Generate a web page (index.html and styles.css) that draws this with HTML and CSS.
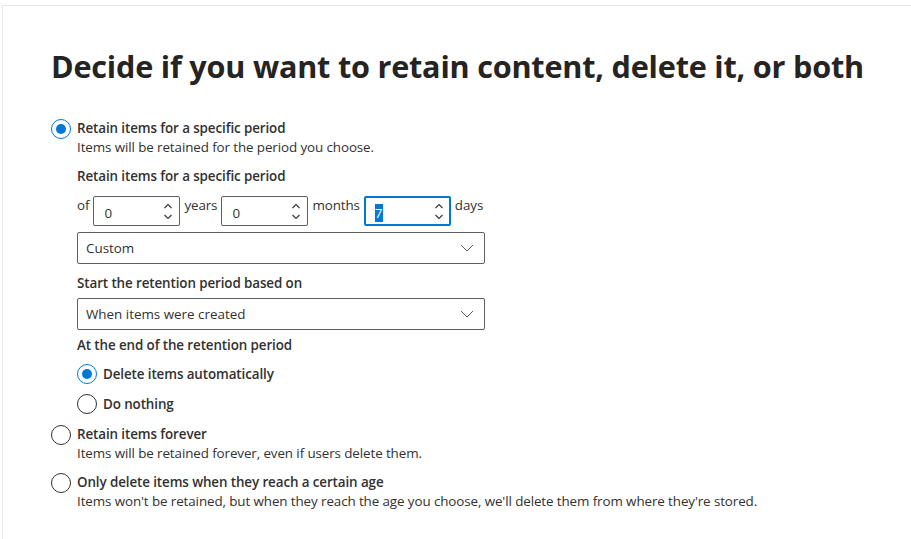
FILE: index.html
```html
<!DOCTYPE html>
<html>
<head>
<meta charset="utf-8">
<link rel="stylesheet" href="styles.css">
</head>
<body>
<div class="frame">
  <h1 class="title">Decide if you want to retain content, delete it, or both</h1>
  <div class="options">
    <div class="opt">
      <span class="radio checked"></span>
      <div class="opt-body">
        <div class="opt-label">Retain items for a specific period</div>
        <div class="opt-desc">Items will be retained for the period you choose.</div>
        <div class="sub">
          <div class="field-label first">Retain items for a specific period</div>
          <div class="period-row">
            <span class="unit">of</span>
            <div class="spin"><span class="val">0</span><span class="arrows"><svg width="10" height="6" viewBox="0 0 10 6"><path d="M1.5 5 L5 1.5 L8.5 5" fill="none" stroke="#323130" stroke-width="1.1"/></svg><svg width="10" height="6" viewBox="0 0 10 6"><path d="M1.5 1 L5 4.5 L8.5 1" fill="none" stroke="#323130" stroke-width="1.1"/></svg></span></div>
            <span class="unit">years</span>
            <div class="spin"><span class="val">0</span><span class="arrows"><svg width="10" height="6" viewBox="0 0 10 6"><path d="M1.5 5 L5 1.5 L8.5 5" fill="none" stroke="#323130" stroke-width="1.1"/></svg><svg width="10" height="6" viewBox="0 0 10 6"><path d="M1.5 1 L5 4.5 L8.5 1" fill="none" stroke="#323130" stroke-width="1.1"/></svg></span></div>
            <span class="unit">months</span>
            <div class="spin focus"><span class="val"><span class="sel">7</span></span><span class="arrows"><svg width="10" height="6" viewBox="0 0 10 6"><path d="M1.5 5 L5 1.5 L8.5 5" fill="none" stroke="#323130" stroke-width="1.1"/></svg><svg width="10" height="6" viewBox="0 0 10 6"><path d="M1.5 1 L5 4.5 L8.5 1" fill="none" stroke="#323130" stroke-width="1.1"/></svg></span></div>
            <span class="unit">days</span>
          </div>
          <div class="dropdown first-dd"><span>Custom</span><svg width="14" height="8" viewBox="0 0 14 8"><path d="M1 1 L7 7 L13 1" fill="none" stroke="#605e5c" stroke-width="1"/></svg></div>
          <div class="field-label start">Start the retention period based on</div>
          <div class="dropdown"><span>When items were created</span><svg width="14" height="8" viewBox="0 0 14 8"><path d="M1 1 L7 7 L13 1" fill="none" stroke="#605e5c" stroke-width="1"/></svg></div>
          <div class="field-label end">At the end of the retention period</div>
          <div class="subopts">
            <div class="subopt"><span class="radio checked"></span><span class="opt-label">Delete items automatically</span></div>
            <div class="subopt"><span class="radio"></span><span class="opt-label">Do nothing</span></div>
          </div>
        </div>
      </div>
    </div>
    <div class="opt">
      <span class="radio"></span>
      <div class="opt-body">
        <div class="opt-label">Retain items forever</div>
        <div class="opt-desc">Items will be retained forever, even if users delete them.</div>
      </div>
    </div>
    <div class="opt">
      <span class="radio"></span>
      <div class="opt-body">
        <div class="opt-label">Only delete items when they reach a certain age</div>
        <div class="opt-desc">Items won't be retained, but when they reach the age you choose, we'll delete them from where they're stored.</div>
      </div>
    </div>
  </div>
</div>
</body>
</html>
```

FILE: styles.css
```css
html, body {
  margin: 0;
  padding: 0;
  background: #ffffff;
  overflow: hidden;
}
body {
  font-family: "Open Sans", "Noto Sans", sans-serif;
  color: #323130;
}
.frame {
  margin-top: 5px;
  margin-left: 2px;
  border-top: 1px solid #e6e6e6;
  border-left: 1px solid #e6e6e6;
  height: 540px;
  box-sizing: border-box;
  padding-left: 48px;
  padding-top: 40px;
}
.title {
  margin: 0;
  font-size: 30.6px;
  font-weight: 700;
  line-height: 40px;
  letter-spacing: -0.2px;
  color: #252423;
}
.options {
  margin-top: 33px;
  display: flex;
  flex-direction: column;
  gap: 9px;
}
.opt {
  display: flex;
  gap: 6px;
  align-items: flex-start;
}
.radio {
  width: 20px;
  height: 20px;
  box-sizing: border-box;
  border: 1px solid #323130;
  border-radius: 50%;
  flex: none;
  position: relative;
  background: #fff;
}
.radio.checked {
  border-color: #0078d4;
}
.radio.checked::after {
  content: "";
  position: absolute;
  left: 4px;
  top: 4px;
  width: 10px;
  height: 10px;
  border-radius: 50%;
  background: #0078d4;
}
.opt-body {
  display: flex;
  flex-direction: column;
}
.opt-label {
  font-size: 13.4px;
  font-weight: 600;
  line-height: 19px;
  letter-spacing: -0.1px;
}
.opt-desc {
  font-size: 13.4px;
  line-height: 19px;
  letter-spacing: -0.1px;
}
.sub {
  display: flex;
  flex-direction: column;
}
.field-label {
  font-size: 13.4px;
  font-weight: 600;
  line-height: 19px;
  letter-spacing: -0.1px;
}
.field-label.first {
  margin-top: 10px;
  margin-bottom: 10px;
}
.field-label.start {
  margin-top: 10px;
  margin-bottom: 5px;
}
.field-label.end {
  margin-top: 6px;
}
.period-row {
  display: flex;
  align-items: flex-start;
  gap: 4px;
}
.unit {
  font-size: 13.4px;
  line-height: 18px;
  letter-spacing: -0.1px;
}
.spin {
  width: 87px;
  height: 30px;
  box-sizing: border-box;
  border: 1px solid #605e5c;
  border-radius: 2px;
  display: flex;
  align-items: center;
  justify-content: space-between;
  padding: 0 6px 0 10px;
}
.spin.focus {
  border: 2px solid #0078d4;
  padding: 0 5px 0 9px;
}
.val {
  font-size: 13.4px;
  padding-top: 3px;
}
.sel {
  background: #0078d4;
  color: #fff;
}
.arrows {
  display: flex;
  flex-direction: column;
  gap: 5px;
}
.arrows svg {
  display: block;
}
.dropdown {
  width: 408px;
  height: 32px;
  box-sizing: border-box;
  border: 1px solid #605e5c;
  border-radius: 2px;
  display: flex;
  align-items: center;
  justify-content: space-between;
  padding: 0 10px 0 8px;
  font-size: 13.4px;
}
.dropdown.first-dd {
  margin-top: 6px;
}
.subopts {
  display: flex;
  flex-direction: column;
  gap: 10px;
  margin-top: 9px;
}
.subopt {
  display: flex;
  align-items: center;
  gap: 6px;
}
.opt + .opt {
  margin-top: 2px;
}
.opt + .opt + .opt {
  margin-top: 1px;
}
```
